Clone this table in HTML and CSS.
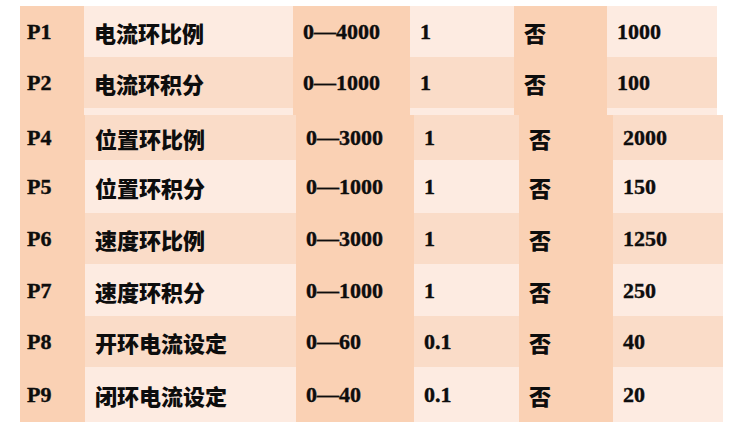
FILE: index.html
```html
<!DOCTYPE html>
<html lang="zh">
<head>
<meta charset="utf-8">
<title>参数表</title>
<link rel="stylesheet" href="styles.css">
</head>
<body>
<div class="sheet">
  <div class="block block-top">
    <div class="row light">
      <div class="cell dk num">P1</div><div class="cell alt cjk">电流环比例</div><div class="cell dk num">0—4000</div><div class="cell alt num">1</div><div class="cell dk cjk">否</div><div class="cell alt num">1000</div>
    </div>
    <div class="row mid">
      <div class="cell dk num">P2</div><div class="cell alt cjk">电流环积分</div><div class="cell dk num">0—1000</div><div class="cell alt num">1</div><div class="cell dk cjk">否</div><div class="cell alt num">100</div>
    </div>
    <div class="row light strip">
      <div class="cell dk"></div><div class="cell alt"></div><div class="cell dk"></div><div class="cell alt"></div><div class="cell dk"></div><div class="cell alt"></div>
    </div>
  </div>
  <div class="block block-bottom">
    <div class="row mid r45">
      <div class="cell dk num">P4</div><div class="cell alt cjk">位置环比例</div><div class="cell dk num">0—3000</div><div class="cell alt num">1</div><div class="cell dk cjk">否</div><div class="cell alt num">2000</div>
    </div>
    <div class="row light r53">
      <div class="cell dk num">P5</div><div class="cell alt cjk">位置环积分</div><div class="cell dk num">0—1000</div><div class="cell alt num">1</div><div class="cell dk cjk">否</div><div class="cell alt num">150</div>
    </div>
    <div class="row mid r51">
      <div class="cell dk num">P6</div><div class="cell alt cjk">速度环比例</div><div class="cell dk num">0—3000</div><div class="cell alt num">1</div><div class="cell dk cjk">否</div><div class="cell alt num">1250</div>
    </div>
    <div class="row light r52">
      <div class="cell dk num">P7</div><div class="cell alt cjk">速度环积分</div><div class="cell dk num">0—1000</div><div class="cell alt num">1</div><div class="cell dk cjk">否</div><div class="cell alt num">250</div>
    </div>
    <div class="row mid r51">
      <div class="cell dk num">P8</div><div class="cell alt cjk">开环电流设定</div><div class="cell dk num">0—60</div><div class="cell alt num">0.1</div><div class="cell dk cjk">否</div><div class="cell alt num">40</div>
    </div>
    <div class="row light r55">
      <div class="cell dk num">P9</div><div class="cell alt cjk">闭环电流设定</div><div class="cell dk num">0—40</div><div class="cell alt num">0.1</div><div class="cell dk cjk">否</div><div class="cell alt num">20</div>
    </div>
  </div>
</div>
</body>
</html>
```

FILE: styles.css
```css
html, body {
  margin: 0;
  padding: 0;
  background: #ffffff;
}

body {
  width: 750px;
  height: 442px;
  overflow: hidden;
}

.sheet {
  display: flex;
  flex-direction: column;
  padding: 6px 0 0 20px;
}

.block {
  display: flex;
  flex-direction: column;
}

.row {
  display: grid;
  height: 51px;
}

.block-top .row {
  grid-template-columns: 64px 209px 117px 104px 93px 110px;
}

.block-bottom .row {
  grid-template-columns: 65px 211px 118px 105px 94px 110px;
}

.row.strip { height: 7px; }
.row.r45 { height: 45px; }
.row.r51 { height: 51px; }
.row.r52 { height: 52px; }
.row.r53 { height: 53px; }
.row.r55 { height: 55px; }

.cell {
  display: flex;
  align-items: center;
  padding-left: 10px;
  padding-top: 1px;
  color: #0d0d0d;
  font-weight: 700;
  white-space: nowrap;
}

.row .cell:first-child { padding-left: 7px; }

.dk { background: #fad1b4; }
.light .alt { background: #fdebe1; }
.mid .alt { background: #fadcc8; }

.num {
  font-family: "Liberation Serif", "Times New Roman", serif;
  font-size: 22px;
  -webkit-text-stroke: 0.4px #0d0d0d;
}

.cjk {
  font-family: "Noto Sans CJK SC", sans-serif;
  font-size: 22px;
  font-weight: 900;
}

.strip .cell { padding: 0; }
```
